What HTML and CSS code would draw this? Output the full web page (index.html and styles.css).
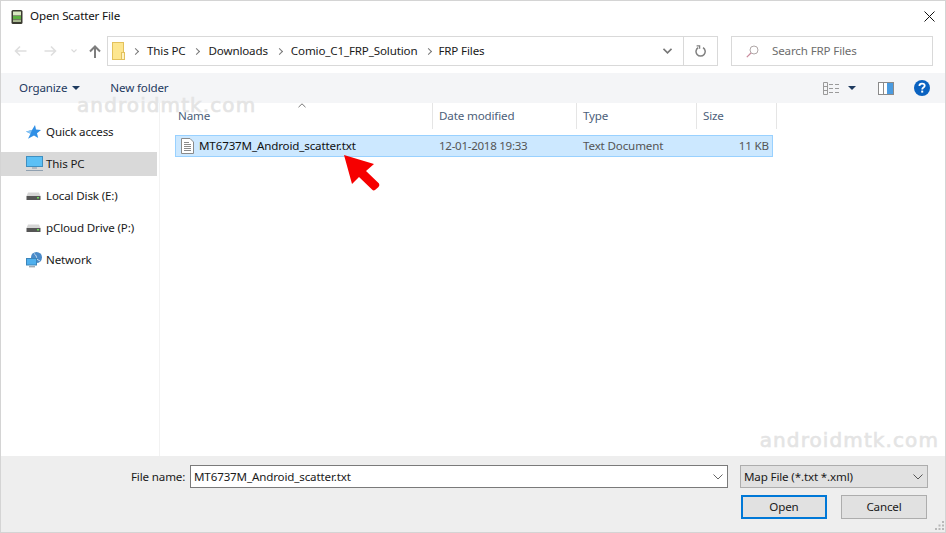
FILE: index.html
```html
<!DOCTYPE html>
<html lang="en">

<head>
    <meta charset="UTF-8">
    <title>Open Scatter File</title>
    <link rel="stylesheet" href="styles.css">
</head>

<body>
    <div class="window">
        <div class="titlebar">
            <svg class="app-icon" width="12" height="14" viewBox="0 0 12 14">
                <rect x="0.5" y="0" width="11" height="14" rx="1.5" fill="#3a3a30" />
                <rect x="2" y="1.5" width="8" height="4" fill="#d8e8c0" />
                <rect x="2" y="6" width="8" height="3" fill="#5cb040" />
                <rect x="2" y="9.5" width="8" height="2.5" fill="#a8b890" />
            </svg>
            <span class="title-text">Open Scatter File</span>
            <svg class="close-icon" width="11" height="11" viewBox="0 0 11 11">
                <path d="M0.5 0.5L10.5 10.5M10.5 0.5L0.5 10.5" stroke="#111" stroke-width="1" fill="none" />
            </svg>
        </div>

        <div class="addressrow">
            <div class="navbtns">
                <svg width="13" height="12" viewBox="0 0 13 12">
                    <path d="M12.5 6H1.5M6 1.5L1.5 6L6 10.5" stroke="#dedede" stroke-width="1.6" fill="none" />
                </svg>
                <svg class="nav-forward" width="13" height="12" viewBox="0 0 13 12">
                    <path d="M0.5 6H11.5M7 1.5L11.5 6L7 10.5" stroke="#dedede" stroke-width="1.6" fill="none" />
                </svg>
                <svg class="nav-recent" width="6" height="4" viewBox="0 0 6 4">
                    <path d="M0.5 0.5L3 3L5.5 0.5" stroke="#dadada" stroke-width="1.1" fill="none" />
                </svg>
                <svg class="nav-up" width="12" height="13" viewBox="0 0 12 13">
                    <path d="M6 13V1.5M1 6.5L6 1.5L11 6.5" stroke="#7d7d7d" stroke-width="2" fill="none" />
                </svg>
            </div>
            <div class="addressbox">
                <svg class="folder-icon" width="13" height="18" viewBox="0 0 13 18">
                    <rect x="0.5" y="0.5" width="11" height="17" fill="#fde68f" stroke="#e3c15c" />
                    <rect x="9.5" y="10.5" width="3" height="7" fill="#fff3c2" stroke="#e3c15c" />
                </svg>
                <span class="crumb-sep"></span><span class="crumb">This PC</span>
                <span class="crumb-sep"></span><span class="crumb">Downloads</span>
                <span class="crumb-sep"></span><span class="crumb">Comio_C1_FRP_Solution</span>
                <span class="crumb-sep"></span><span class="crumb crumb-last">FRP Files</span>
                <div class="address-end">
                    <svg width="9" height="6" viewBox="0 0 9 6">
                        <path d="M0.5 0.8L4.5 4.8L8.5 0.8" stroke="#777" stroke-width="1.6" fill="none" />
                    </svg>
                </div>
                <div class="refresh">
                    <svg width="11" height="12" viewBox="0 0 11 12">
                        <path d="M3.2 2.6A4.6 4.6 0 1 0 8 2.6" stroke="#808080" stroke-width="1.5" fill="none" />
                        <path d="M1.6 0.8H4.6V3.8" stroke="#808080" stroke-width="1.3" fill="none" />
                    </svg>
                </div>
            </div>
            <div class="searchbox">
                <svg width="13" height="13" viewBox="0 0 13 13">
                    <circle cx="8" cy="5" r="4" fill="none" stroke="#b0a8a8" stroke-width="1" />
                    <path d="M5 8L0.8 12.2" stroke="#c98a9c" stroke-width="1.2" />
                </svg>
                <span class="search-text">Search FRP Files</span>
            </div>
        </div>

        <div class="toolbar">
            <span class="tool">Organize</span>
            <span class="caret"></span>
            <span class="tool new-folder">New folder</span>
            <div class="toolbar-right">
                <svg class="views-icon" width="16" height="13" viewBox="0 0 16 13">
                    <path d="M0.5 0.5H4.5V12.5H0.5ZM0.5 4.5H4.5M0.5 8.5H4.5" stroke="#9a9a9a" fill="none" />
                    <path d="M6 2.5H10M12 2.5H16M6 6.5H10M12 6.5H16M6 10.5H10M12 10.5H16" stroke="#9a9a9a" fill="none" />
                </svg>
                <span class="caret views-caret"></span>
                <svg class="pane-icon" width="16" height="13" viewBox="0 0 16 13">
                    <rect x="0.5" y="0.5" width="15" height="12" fill="#fff" stroke="#8a8a8a" />
                    <rect x="9" y="1" width="6" height="11" fill="#4a9be0" />
                    <rect x="5" y="1" width="1" height="11" fill="#8a8a8a" />
                </svg>
                <svg class="help-icon" width="16" height="16" viewBox="0 0 16 16">
                    <circle cx="8" cy="8" r="8" fill="#0a62c0" />
                    <path d="M5.4 6C5.4 4.4 6.6 3.6 8 3.6C9.6 3.6 10.7 4.4 10.7 5.8C10.7 7.6 8.2 7.6 8.2 9.4" stroke="#fff" stroke-width="1.8" fill="none" />
                    <rect x="7.2" y="10.6" width="2" height="2" fill="#fff" />
                </svg>
            </div>
        </div>

        <div class="main">
            <div class="sidebar">
                <div class="nav-item">
                    <svg class="nav-icon" width="15" height="14" viewBox="0 0 15 14">
                        <path d="M9 0L10 4.500L15 5L11 8.200L12.200 13L8 10.400L2 13.800L4.500 8.800L0 6.500L6 5Z" fill="#2f8fe6" />
                        <path d="M0 6.500L6 5L4.500 8.800Z" fill="#86c4f5" />
                    </svg>
                    <span>Quick access</span>
                </div>
                <div class="nav-item selected">
                    <svg class="nav-icon" width="17" height="16" viewBox="0 0 17 16">
                        <rect x="0.5" y="0.5" width="16" height="10" fill="#5cc0f5" stroke="#3f8fc0" />
                        <rect x="6" y="11" width="5" height="2" fill="#b0b8c0" />
                        <rect x="0" y="14" width="17" height="1" fill="#8fa0b0" />
                    </svg>
                    <span>This PC</span>
                </div>
                <div class="nav-item">
                    <svg class="nav-icon" width="15" height="8" viewBox="0 0 15 8">
                        <path d="M2 0.5H13L14.5 4H0.5Z" fill="#d5d5d5" />
                        <rect x="0.5" y="4" width="14" height="4" fill="#555" />
                        <rect x="11" y="5" width="2" height="1.5" fill="#6fdc5a" />
                    </svg>
                    <span>Local Disk (E:)</span>
                </div>
                <div class="nav-item">
                    <svg class="nav-icon" width="15" height="8" viewBox="0 0 15 8">
                        <path d="M2 0.5H13L14.5 4H0.5Z" fill="#d5d5d5" />
                        <rect x="0.5" y="4" width="14" height="4" fill="#555" />
                        <rect x="11" y="5" width="2" height="1.5" fill="#6fdc5a" />
                    </svg>
                    <span>pCloud Drive (P:)</span>
                </div>
                <div class="nav-item">
                    <svg class="nav-icon" width="16" height="16" viewBox="0 0 16 16">
                        <circle cx="10.5" cy="5.5" r="5.5" fill="#4a8ac8" />
                        <path d="M8 1.5C10 3 11 5 10.5 7L14 9" stroke="#c5dcef" fill="none" />
                        <rect x="0.5" y="6.5" width="10" height="6.5" fill="#4fb0ee" stroke="#3c85ba" />
                        <rect x="3" y="14" width="6" height="1.4" fill="#a0aab4" />
                    </svg>
                    <span>Network</span>
                </div>
            </div>

            <div class="files">
                <div class="list-header">
                    <div class="col-head col-name">Name
                        <svg class="sort-mark" width="8" height="5" viewBox="0 0 8 5">
                            <path d="M0.5 4.2L4 0.8L7.5 4.2" stroke="#777" fill="none" />
                        </svg>
                    </div>
                    <div class="col-head col-date">Date modified</div>
                    <div class="col-head col-type">Type</div>
                    <div class="col-head col-size">Size</div>
                </div>
                <div class="file-row">
                    <svg class="doc-icon" width="13" height="16" viewBox="0 0 13 16">
                        <path d="M0.5 0.5H9L12.5 4V15.5H0.5Z" fill="#fff" stroke="#8a8a8a" />
                        <path d="M3 4.5H8M3 6.5H10M3 8.5H10M3 10.5H10M3 12.5H10" stroke="#8a8a8a" fill="none" />
                    </svg>
                    <span class="cell-name">MT6737M_Android_scatter.txt</span>
                    <span class="cell-date">12-01-2018 19:33</span>
                    <span class="cell-type">Text Document</span>
                    <span class="cell-size">11 KB</span>
                </div>
            </div>
        </div>

        <div class="footer">
            <div class="footer-row">
                <span class="file-label">File name:</span>
                <div class="name-input">
                    <span>MT6737M_Android_scatter.txt</span>
                    <svg width="10" height="6" viewBox="0 0 10 6">
                        <path d="M0.5 0.5L5 5L9.5 0.5" stroke="#666" fill="none" />
                    </svg>
                </div>
                <div class="type-select">
                    <span>Map File (*.txt *.xml)</span>
                    <svg width="10" height="6" viewBox="0 0 10 6">
                        <path d="M0.5 0.5L5 5L9.5 0.5" stroke="#555" fill="none" />
                    </svg>
                </div>
            </div>
            <div class="footer-buttons">
                <div class="btn btn-default">Open</div>
                <div class="btn">Cancel</div>
            </div>
            <svg class="grip" width="10" height="10" viewBox="0 0 10 10">
                <path d="M7 0h2v2H7zM3.500 3.500h2v2h-2zM7 3.500h2v2H7zM0 7h2v2H0zM3.500 7h2v2h-2zM7 7h2v2H7z" fill="#b8b8b8" />
            </svg>
        </div>

        <div class="watermark wm-top">androidmtk.com</div>
        <div class="watermark wm-bottom">androidmtk.com</div>

        <svg class="red-arrow" width="38" height="38" viewBox="0 0 38 38">
            <path d="M1 1L31 10L23 17L36 29.500Q37 31 35.500 33L32 36Q30.500 37 29 35.500L16 23L9 30Z" fill="#f60000" />
        </svg>
    </div>
</body>

</html>
```

FILE: styles.css
```css
* {
    box-sizing: border-box;
}

html,
body {
    margin: 0;
    height: 100%;
    overflow: hidden;
}

body {
    font-family: "Noto Sans", "Open Sans", sans-serif;
    font-size: 11.6px;
    letter-spacing: -0.15px;
    color: #1a1a1a;
    background: #fff;
}

.window {
    position: relative;
    display: flex;
    flex-direction: column;
    width: 946px;
    height: 533px;
    border: 1px solid #d4d4d4;
    background: #fff;
}

.titlebar {
    display: flex;
    align-items: center;
    height: 31px;
    padding: 0 10px 0 10px;
    flex: none;
}

.title-text {
    margin-left: 7px;
    margin-bottom: 2px;
    color: #111;
}

.close-icon {
    margin-left: auto;
}

.addressrow {
    display: flex;
    height: 30px;
    margin-top: 4px;
    flex: none;
}

.navbtns {
    display: flex;
    align-items: center;
    width: 106px;
    padding-left: 13px;
}

.nav-forward {
    margin-left: 17px;
}

.nav-recent {
    margin-left: 14px;
}

.nav-up {
    margin-left: 12px;
}

.addressbox {
    display: flex;
    align-items: center;
    width: 611px;
    border: 1px solid #d9d9d9;
    padding-left: 4px;
}

.folder-icon {
    margin-right: 8px;
}

.crumb-sep {
    width: 5px;
    height: 5px;
    margin-right: 9px;
    border-top: 1.500px solid #777;
    border-right: 1.500px solid #777;
    transform: rotate(45deg);
}

.crumb {
    margin-right: 9px;
    margin-bottom: 2px;
}

.crumb-last {
    margin-left: -2px;
}

.address-end {
    display: flex;
    align-items: center;
    justify-content: center;
    margin-left: auto;
    width: 33px;
    height: 100%;
    border-right: 1px solid #d9d9d9;
}

.refresh {
    display: flex;
    align-items: center;
    justify-content: center;
    width: 33px;
    height: 100%;
}

.searchbox {
    display: flex;
    align-items: center;
    width: 202px;
    margin-left: 13px;
    padding-left: 14px;
    border: 1px solid #d9d9d9;
}

.search-text {
    margin-left: 13px;
    margin-bottom: 2px;
    color: #6d6d6d;
}

.toolbar {
    display: flex;
    align-items: center;
    height: 30px;
    margin-top: 7px;
    padding-left: 18px;
    background: #f4f5f7;
    flex: none;
}

.tool {
    margin-bottom: 2px;
    color: #1e3a5f;
}

.caret {
    width: 0;
    height: 0;
    margin-left: 5px;
    border-left: 4px solid transparent;
    border-right: 4px solid transparent;
    border-top: 4px solid #1e3a5f;
}

.new-folder {
    margin-left: 30px;
}

.toolbar-right {
    display: flex;
    align-items: center;
    margin-left: auto;
    padding-right: 15px;
}

.views-caret {
    margin-left: 9px;
}

.pane-icon {
    margin-left: 22px;
}

.help-icon {
    margin-left: 20px;
}

.main {
    display: flex;
    flex: 1;
    min-height: 0;
}

.sidebar {
    width: 159px;
    padding-top: 17px;
    border-right: 1px solid #f2f2f2;
    flex: none;
}

.nav-item {
    position: relative;
    display: flex;
    align-items: center;
    height: 24px;
    margin-bottom: 8px;
    padding-left: 45px;
    margin-right: 2px;
}

.nav-item span {
    margin-bottom: 2px;
}

.nav-item.selected {
    background: #d9d9d9;
}

.nav-icon {
    position: absolute;
    left: 25px;
    top: 50%;
    transform: translateY(-50%);
}

.files {
    flex: 1;
    min-width: 0;
}

.list-header {
    display: flex;
    height: 26px;
}

.col-head {
    position: relative;
    display: flex;
    align-items: center;
    padding-left: 6px;
    border-right: 1px solid #e5e5e5;
    line-height: 12px;
    color: #4c607a;
}

.col-name {
    width: 273px;
    padding-left: 18px;
}

.col-date {
    width: 144px;
}

.col-type {
    width: 120px;
}

.col-size {
    width: 80px;
}

.sort-mark {
    position: absolute;
    left: 138px;
    top: 0;
}

.file-row {
    display: flex;
    align-items: center;
    width: 598px;
    height: 22px;
    margin: 6px 0 0 15px;
    border: 1px solid #99d1ff;
    background: #cce8ff;
}

.file-row span {
    margin-bottom: 2px;
}

.doc-icon {
    margin-left: 5px;
    flex: none;
}

.cell-name {
    width: 234px;
    margin-left: 5px;
    color: #111;
}

.cell-date {
    width: 144px;
    padding-left: 6px;
    letter-spacing: -0.3px;
    color: #555;
}

.cell-type {
    width: 120px;
    padding-left: 6px;
    color: #555;
}

.cell-size {
    flex: 1;
    padding-right: 3px;
    text-align: right;
    color: #555;
}

.footer {
    position: relative;
    height: 76px;
    padding: 9px 17px 0 130px;
    background: #eeeeee;
    flex: none;
}

.footer-row {
    display: flex;
    align-items: center;
}

.file-label {
    width: 59px;
}

.name-input {
    display: flex;
    align-items: center;
    justify-content: space-between;
    width: 538px;
    height: 23px;
    padding: 0 4px 0 3px;
    border: 1px solid #7a7a7a;
    background: #fff;
}

.type-select {
    display: flex;
    align-items: center;
    justify-content: space-between;
    width: 188px;
    height: 23px;
    margin-left: 12px;
    padding: 0 4px 0 3px;
    border: 1px solid #adadad;
    background: #e1e1e1;
}

.footer-buttons {
    display: flex;
    justify-content: flex-end;
    gap: 14px;
    margin-top: 7px;
    margin-right: 1px;
}

.btn {
    display: flex;
    align-items: center;
    justify-content: center;
    width: 86px;
    height: 24px;
    padding-bottom: 2px;
    border: 1px solid #adadad;
    background: #e1e1e1;
}

.btn-default {
    border: 2px solid #0078d7;
}

.grip {
    position: absolute;
    right: 0;
    bottom: 1px;
}

.watermark {
    position: absolute;
    font-family: "DejaVu Sans", sans-serif;
    font-size: 20px;
    letter-spacing: 1.100px;
    line-height: 12px;
    color: #e4e4e4;
    -webkit-text-stroke: 0.6px #e4e4e4;
    white-space: nowrap;
}

.wm-top {
    left: 76px;
    top: 98px;
}

.wm-bottom {
    right: 6px;
    top: 433px;
}

.red-arrow {
    position: absolute;
    left: 342px;
    top: 153px;
}
```
